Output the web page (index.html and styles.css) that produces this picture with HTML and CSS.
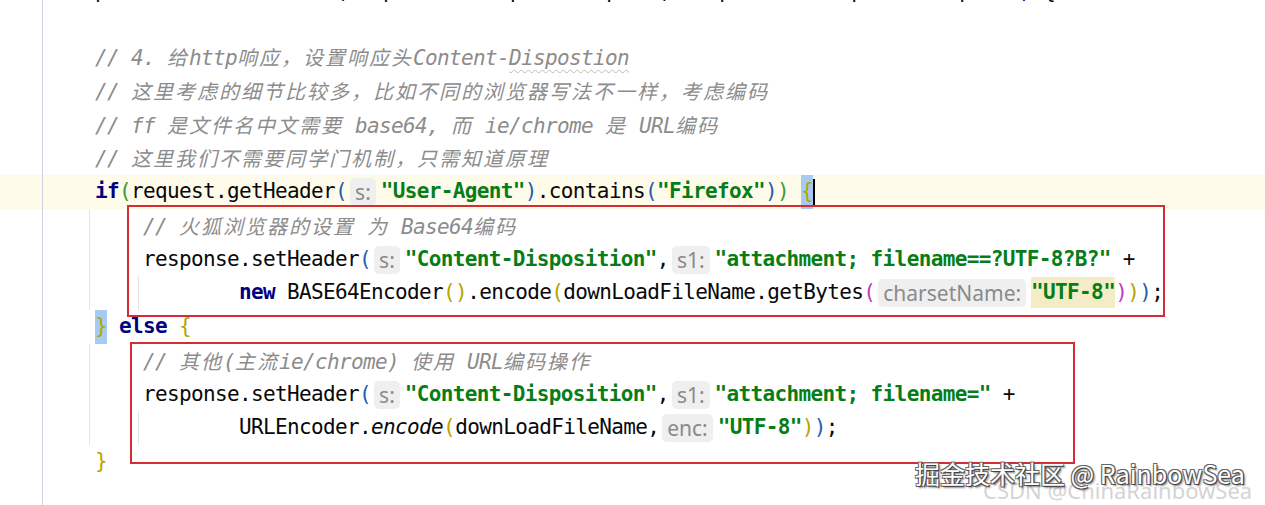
FILE: index.html
```html
<!DOCTYPE html>
<html lang="zh-CN">
<head>
<meta charset="utf-8">
<title>Editor</title>
<link rel="stylesheet" href="styles.css">
</head>
<body>
<div class="editor">
<div class="row"><div class="gut"></div><div class="code cut">protected void doGet(HttpServletRequest request, HttpServletResponse response) {</div></div>
<div class="row"><div class="gut"></div><div class="code"></div></div>
<div class="row"><div class="gut"></div><div class="code"><span class="cm">// 4. <span class="cjk">给</span>http<span class="cjk">响应，设置响应头</span>Content-<span class="typo">Dispostion</span></span></div></div>
<div class="row"><div class="gut"></div><div class="code"><span class="cm">// <span class="cjk">这里考虑的细节比较多，比如不同的浏览器写法不一样，考虑编码</span></span></div></div>
<div class="row"><div class="gut"></div><div class="code"><span class="cm">// ff <span class="cjk">是文件名中文需要</span> base64, <span class="cjk">而</span> ie/chrome <span class="cjk">是</span> URL<span class="cjk">编码</span></span></div></div>
<div class="row"><div class="gut"></div><div class="code"><span class="cm">// <span class="cjk">这里我们不需要同学门机制，只需知道原理</span></span></div></div>
<div class="row cur"><div class="gut"></div><div class="code"><span class="kw">if</span><span class="bg">(</span>request.getHeader<span class="bb">(</span><span class="hint">s:</span><span class="str">"User-Agent"</span><span class="bb">)</span>.contains<span class="bb">(</span><span class="str">"Firefox"</span><span class="bb">)</span><span class="bg">)</span> <span class="sel by">{</span><span class="caret"></span></div></div>
<div class="row"><div class="gut"></div><div class="code g1">    <span class="cm">// <span class="cjk">火狐浏览器的设置</span> <span class="cjk">为</span> Base64<span class="cjk">编码</span></span></div></div>
<div class="row"><div class="gut"></div><div class="code g1">    response.setHeader<span class="bb">(</span><span class="hint">s:</span><span class="str">"Content-Disposition"</span>,<span class="hint">s1:</span><span class="str">"attachment; filename==?UTF-8?B?"</span> +</div></div>
<div class="row"><div class="gut"></div><div class="code g2">            <span class="kw">new</span> BASE64Encoder<span class="by">()</span>.encode<span class="by">(</span>downLoadFileName.getBytes<span class="bm">(</span><span class="hint">charsetName:</span><span class="str hl">"UTF-8"</span><span class="bm">)</span><span class="by">)</span><span class="bb">)</span>;</div></div>
<div class="row"><div class="gut"></div><div class="code"><span class="sel by">}</span> <span class="kw">else</span> <span class="by">{</span></div></div>
<div class="row"><div class="gut"></div><div class="code g1">    <span class="cm">// <span class="cjk">其他</span>(<span class="cjk">主流</span>ie/chrome) <span class="cjk">使用</span> URL<span class="cjk">编码操作</span></span></div></div>
<div class="row"><div class="gut"></div><div class="code g1">    response.setHeader<span class="bb">(</span><span class="hint">s:</span><span class="str">"Content-Disposition"</span>,<span class="hint">s1:</span><span class="str">"attachment; filename="</span> +</div></div>
<div class="row"><div class="gut"></div><div class="code g2">            URLEncoder.<span class="it">encode</span><span class="by">(</span>downLoadFileName,<span class="hint">enc:</span><span class="str">"UTF-8"</span><span class="by">)</span><span class="bb">)</span>;</div></div>
<div class="row"><div class="gut"></div><div class="code"><span class="by">}</span></div></div>
<div class="row"><div class="gut"></div><div class="code"></div></div>
</div>
<div class="mark m1"></div>
<div class="mark m2"></div>
<div class="wm2">CSDN @ChinaRainbowSea</div>
<div class="wm">掘金技术社区 @ RainbowSea</div>
</body>
</html>
```

FILE: styles.css
```css
html, body {
  margin: 0;
  padding: 0;
}
body {
  background: #ffffff;
  width: 1265px;
  height: 505px;
  overflow: hidden;
  position: relative;
}
.editor {
  margin-top: -27.5px;
}
.row {
  display: flex;
  height: 33.75px;
}
.row.cur {
  background: #fefbea;
}
.gut {
  width: 42px;
  flex: none;
  border-right: 1px solid #cdd2e2;
}
.code {
  flex: 1;
  padding-left: 52px;
  white-space: pre;
  font-family: "DejaVu Sans Mono", monospace;
  font-size: 21px;
  letter-spacing: -0.64px;
  line-height: 33.75px;
  color: #080808;
  overflow: hidden;
}
.code.cut {
  padding-top: 5px;
  line-height: 26.75px;
}
.code.g1 {
  background: linear-gradient(#e4e4e4, #e4e4e4) no-repeat 46px 0 / 1px 100%;
}
.code.g2 {
  background:
    linear-gradient(#e4e4e4, #e4e4e4) no-repeat 46px 0 / 1px 100%,
    linear-gradient(#e4e4e4, #e4e4e4) no-repeat 95px 0 / 1px 100%;
}
.cm {
  color: #8c8c8c;
  font-style: italic;
}
.cjk {
  font-family: "Noto Sans CJK SC", sans-serif;
  font-size: 20px;
  letter-spacing: 2px;
}
.typo {
  text-decoration: underline wavy #b9c2b0;
  text-decoration-thickness: 1px;
  text-underline-offset: 4px;
}
.kw {
  color: #000080;
  font-weight: bold;
}
.str {
  color: #067d17;
  font-weight: bold;
}
.it {
  font-style: italic;
}
.bg { color: #3a9a3a; }
.bb { color: #1f5fb0; }
.by { color: #b5a400; }
.bm { color: #c038c0; }
.hl {
  display: inline-block;
  background: #f3ecc6;
  line-height: 31px;
}
.sel {
  display: inline-block;
  background: #a6cbf2;
  line-height: 33.75px;
}
.caret {
  display: inline-block;
  width: 2px;
  height: 26px;
  background: #000;
  vertical-align: middle;
}
.hint {
  display: inline-block;
  font-family: "Noto Sans", sans-serif;
  font-size: 21px;
  font-style: normal;
  font-weight: normal;
  letter-spacing: 0;
  color: #8a8a8a;
  background: #efefef;
  border-radius: 5px;
  padding: 0 5px;
  margin: 0 5px 0 3px;
  line-height: 28px;
  vertical-align: middle;
}
.mark {
  position: absolute;
  border: 2px solid #d42d35;
}
.m1 {
  left: 127px;
  top: 205px;
  width: 1034px;
  height: 108px;
}
.m2 {
  left: 130px;
  top: 342px;
  width: 941px;
  height: 118px;
}
.wm {
  position: absolute;
  left: 915px;
  top: 461px;
  font-family: "Noto Sans CJK SC", "Noto Sans", sans-serif;
  font-size: 25px;
  line-height: 25px;
  color: #ffffff;
  white-space: nowrap;
  text-shadow: 1px 1px 0 #444, -1px -1px 0 #666, 1px -1px 0 #666, -1px 1px 0 #666, 2px 2px 2px rgba(0,0,0,0.5);
}
.wm2 {
  position: absolute;
  left: 983px;
  top: 479px;
  font-family: "Noto Sans", sans-serif;
  font-size: 22px;
  line-height: 22px;
  color: #d4d4d4;
  white-space: nowrap;
}
```
